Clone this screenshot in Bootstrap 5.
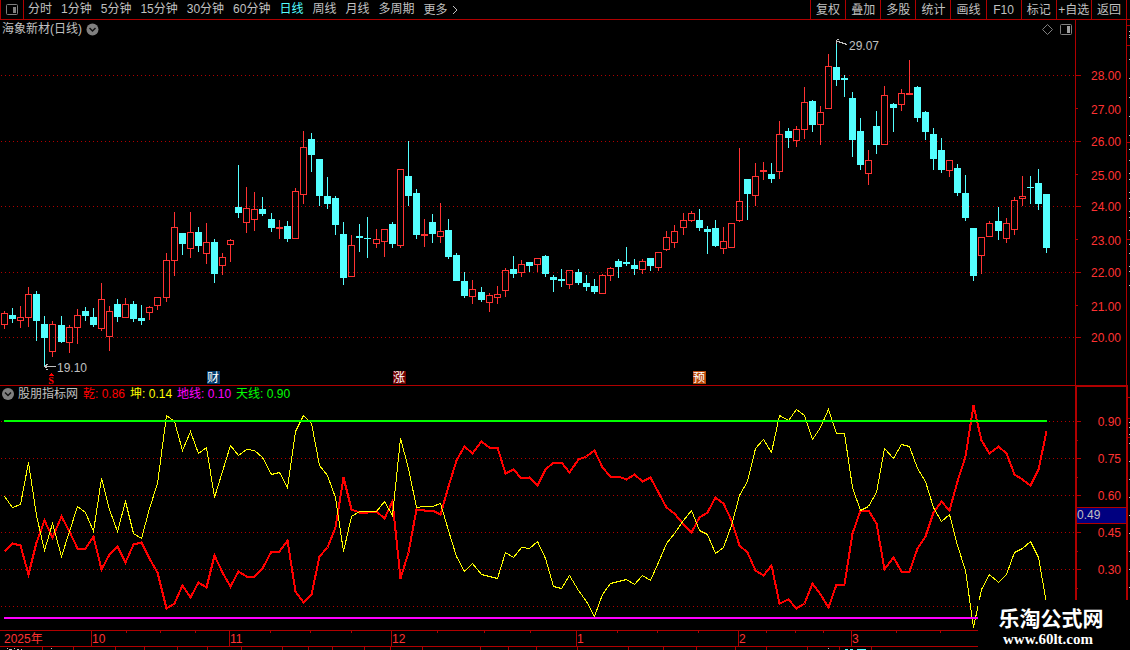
<!DOCTYPE html>
<html lang="zh-CN">
<head>
<meta charset="utf-8">
<meta name="viewport" content="width=device-width, initial-scale=1">
<title>海象新材(日线)</title>
<link href="https://cdn.jsdelivr.net/npm/bootstrap@5.3.0/dist/css/bootstrap.min.css" rel="stylesheet">
<style>
:root { --rule:#b00000; --ink:#c0c0c0; --up:#ff3232; --down:#54ffff; }
body { background:#000; color:var(--ink); font:12px/18px "Liberation Sans","Noto Sans CJK SC",sans-serif; overflow:hidden; }
svg { display:block; }
svg text { font-family:"Liberation Sans","Noto Sans CJK SC",sans-serif; font-size:12px; }
.topbar { height:20px; border-bottom:1px solid var(--rule); }
.topbar a { color:var(--ink); text-decoration:none; white-space:nowrap; }
.topbar a.active { color:var(--down); }
.periods { gap:9px; padding-left:4px; }
.plain-btn { background:none; border:0; padding:0; color:inherit; font:inherit; line-height:18px; }
.layout-btn { width:24px; height:19px; padding-left:4px; border:solid var(--rule); border-width:0 1px; }
.tools { width:320px; padding-right:3px; border-left:1px solid var(--rule); }
.tools .plain-btn { flex:1 1 0; white-space:nowrap; border-right:1px solid var(--rule); height:19px; }
.price-pane { height:366px; border-bottom:1px solid var(--rule); }
.study-pane { height:244px; }
.scale-col { width:51px; }
.pane-title { position:relative; height:18px; white-space:nowrap; }
.study-title { gap:5px; padding-left:2px; height:16px; line-height:16px; }
.price-scale { height:365px; border-left:1px solid var(--rule); }
.study-scale { height:263px; border:2px solid var(--rule); border-bottom:0; width:53px; }
.edge-strip { width:4px; border-left:1px solid var(--rule); }
.dates { height:17px; border:solid var(--rule); border-width:1px 0; }
.footer-strip { height:3px; overflow:hidden; }
.site-mark { right:0; bottom:0; width:152px; height:50px; background:#000; color:#fff; padding:8px 6px 0 0; text-align:center; }
.site-name { font:bold 21px/22px "Liberation Sans","Noto Sans CJK SC",sans-serif; }
.site-url { font:bold 15px/18px "Liberation Serif",serif; color:#fff; text-decoration:none; display:block; padding-right:6px; }
</style>
</head>
<body>
<div class="position-relative d-flex flex-column">
  <header class="topbar d-flex">
    <button class="plain-btn layout-btn" aria-label="布局">
      <svg width="14" height="16"><rect x="1.5" y="2.5" width="11" height="10" rx="1" fill="none" stroke="#808080"/><path d="M8 5h3v6H8z" fill="#808080"/></svg>
    </button>
    <nav class="periods d-flex flex-grow-1">
      <a href="#">分时</a><a href="#">1分钟</a><a href="#">5分钟</a><a href="#">15分钟</a><a href="#">30分钟</a><a href="#">60分钟</a><a href="#" class="active">日线</a><a href="#">周线</a><a href="#">月线</a><a href="#">多周期</a>
      <a href="#" class="d-flex gap-1 align-items-center">更多 <svg width="7" height="10"><path d="M1 1l4 4-4 4" fill="none" stroke="#c0c0c0"/></svg></a>
    </nav>
    <div class="tools d-flex">
      <button class="plain-btn">复权</button><button class="plain-btn">叠加</button><button class="plain-btn">多股</button><button class="plain-btn">统计</button><button class="plain-btn">画线</button><button class="plain-btn">F10</button><button class="plain-btn">标记</button><button class="plain-btn">+自选</button><button class="plain-btn">返回</button>
    </div>
  </header>

  <main class="d-flex">
    <div class="flex-grow-1 overflow-hidden">
      <section class="price-pane position-relative">
        <svg id="price" class="position-absolute top-0 start-0 w-100 h-100"></svg>
        <div class="pane-title d-flex align-items-center justify-content-between ps-0">
          <div class="d-flex align-items-center gap-1" style="padding-left:2px">
            <span>海象新材(日线)</span>
            <button class="plain-btn" aria-label="展开"><svg width="13" height="13"><circle cx="6.5" cy="6.5" r="6" fill="#808080"/><path d="M3.5 5l3 3 3-3" fill="none" stroke="#111" stroke-width="1.5"/></svg></button>
          </div>
          <svg width="34" height="16" class="flex-shrink-0"><path d="M6.5 3.500l5 5-5 5-5-5z" fill="none" stroke="#808080"/><rect x="19.500" y="3.500" width="11" height="10" rx="1" fill="none" stroke="#808080"/><path d="M26 5h3v7h-3z" fill="#a0a0a0"/></svg>
        </div>
      </section>
      <section class="study-pane position-relative">
        <svg id="study" class="position-absolute top-0 start-0 w-100 h-100"></svg>
        <div class="pane-title study-title d-flex align-items-center">
          <button class="plain-btn" aria-label="展开"><svg width="12" height="12"><circle cx="6" cy="6" r="6" fill="#808080"/><path d="M3 4.500l3 3 3-3" fill="none" stroke="#111" stroke-width="1.500"/></svg></button>
          <span style="margin-left:-1px">股朋指标网</span>
          <span style="color:#f00">乾: 0.86</span><span style="color:#ff0">坤: 0.14</span><span style="color:#f0f">地线: 0.10</span><span style="color:#0f0">天线: 0.90</span>
        </div>
      </section>
      <div class="dates"><svg id="dates" width="100%" height="15"></svg></div>
      <div class="footer-strip"><svg id="foot" width="100%" height="3"></svg></div>
    </div>
    <aside class="scale-col">
      <div class="price-scale"><svg id="priceScale" width="50" height="365"></svg></div>
      <div class="study-scale"><svg id="studyScale" width="49" height="261"></svg></div>
    </aside>
    <div class="edge-strip"><svg id="edge" width="3" height="580"></svg></div>
  </main>

  <div class="site-mark position-absolute">
    <div class="site-name">乐淘公式网</div>
    <a class="site-url" href="#">www.60lt.com</a>
  </div>
</div>

<script>
// Each candle: direction, high, body top, body bottom, low.
const candles = `R311,313,325,329 C308,315,319,323 R306,317,321,328 R287,294,318,327 C291,294,321,341 C316,324,338,366 R321,324,352,357 C316,325,342,343 R325,327,343,353 R309,315,328,344
C307,311,316,321 C308,317,325,327 R283,299,329,331 R306,311,337,351 C299,304,317,322 R298,304,318,318 C301,304,319,322 C305,318,321,325 R306,307,313,320 R297,297,306,310
R253,260,298,302 R212,227,261,276 C233,233,244,255 R212,232,249,258 C227,232,246,252 R223,242,254,264 C239,242,274,283 R253,257,266,275 R239,240,245,262 C165,207,213,218
R187,208,223,233 R192,209,220,231 C197,209,214,216 C213,219,228,232 R220,227,229,239 C221,226,239,242 R188,191,239,239 R131,147,195,204 C133,139,155,172 C159,159,196,206
C177,196,204,209 C196,198,225,235 C222,234,278,285 R235,245,277,277 C224,236,238,252 C217,238,239,258 R229,239,244,248 R229,229,242,257 C222,224,244,248 R169,169,246,248
C141,176,196,206 C189,193,235,239 R219,234,236,247 C214,222,234,243 R203,231,237,243 C219,230,257,259 C253,255,281,281 C272,281,296,298 R280,289,297,304 C287,292,300,302
R293,295,303,312 R286,294,298,304 R268,270,291,297 C256,269,274,278 R260,264,273,277 C262,262,266,272 R258,258,265,272 C255,256,274,277 C275,277,280,292 C269,279,281,287
R270,270,285,289 C269,272,283,285 C275,283,287,291 C279,286,292,294 R274,275,294,294 R267,268,276,281 C259,261,267,278 C247,262,264,266 C259,265,269,275 R259,261,270,274
C258,258,266,271 R252,252,268,271 R231,237,250,251 R225,231,243,248 R213,220,228,235 R211,213,221,222 C209,220,228,231 C226,229,232,254 C220,228,246,247 R227,241,249,254
R223,223,248,248 R148,201,221,222 C179,179,194,220 R163,176,196,206 R162,170,172,180 C163,174,179,183 R121,134,172,179 C128,131,138,148 R126,129,141,147 R87,102,130,139
C100,101,125,132 R106,112,125,145 R54,66,109,109 C40,67,80,86 C75,78,80,97 C92,98,140,157 C118,131,165,170 R150,160,174,185 C111,126,145,154 R86,95,145,145
C103,104,108,132 R89,93,105,111 R60,93,95,95 C86,87,118,122 C111,112,132,140 C128,134,159,170 C138,150,170,173 R160,160,171,177 C164,168,193,196 C175,193,218,221
C228,228,276,281 R237,237,256,274 R221,223,237,237 C207,221,231,240 R218,223,239,243 R197,200,230,235 R176,196,199,206 C176,187,188,204 C169,183,204,210 C194,194,248,253`
  .split(/\s+/).map(s => [s[0], ...s.slice(1).split(',').map(Number)]);

const kun = [496,507,504,462,515,550,523,556,531,506,512,531,478,509,531,501,533,538,508,483,415,421,450,431,453,447,497,471,445,455,449,450,457,474,472,487,431,415,423,465,475,497,551,516,511,511,511,501,515,438,468,507,506,506,503,530,556,571,563,574,576,578,552,557,547,548,541,558,586,588,575,590,601,616,594,583,581,579,584,575,580,562,543,533,520,510,530,534,553,547,525,495,481,448,439,452,415,420,409,415,439,427,409,433,433,487,510,506,492,448,458,444,446,468,481,507,521,514,545,570,627,589,574,582,574,552,548,541,557,603];
const qian = [551,543,545,574,542,520,537,516,531,548,548,536,569,554,546,562,544,542,558,572,608,603,585,597,582,587,555,572,586,571,576,576,568,551,551,540,591,602,594,556,547,527,477,509,512,512,511,518,501,578,552,509,510,510,514,486,460,446,453,441,447,447,473,469,478,477,485,469,462,462,472,459,456,450,467,476,476,479,474,481,477,492,507,513,524,532,517,512,497,503,520,545,552,570,575,565,603,599,608,603,583,594,607,584,584,533,510,510,523,569,557,571,571,548,536,512,501,510,481,456,405,440,453,446,453,474,479,485,469,431];

const RULE = '#b00000', UP = '#ff3232', DOWN = '#54ffff', INK = '#c0c0c0';
const $ = id => document.getElementById(id);
const rect = (x, y, w, h, c) => `<rect x="${x}" y="${y}" width="${w}" height="${h}" fill="${c}"/>`;
const text = (x, y, s, c, extra = '') => `<text x="${x}" y="${y}" fill="${c}" ${extra}>${s}</text>`;
const dots = (y, w) => `<path d="M1 ${y + .5}H${w}" stroke="${RULE}" stroke-dasharray="1 3"/>`;

function draw() {
  const w = $('price').clientWidth, step = (w - 33) / 129;
  const X = i => Math.round(4 + i * step);
  const at = x => Math.round(x * w / 1075);

  let s = '<g transform="translate(0,-20)" shape-rendering="crispEdges">';
  [75, 141, 206, 272, 337].forEach(y => s += dots(y, w));
  candles.forEach(([k, h, t, b, l], i) => {
    const x = X(i), c = k === 'R' ? UP : DOWN;
    if (k === 'C' || b - t < 3) s += rect(x, h, 1, l - h, c) + rect(x - 3, t, 7, b - t, c);
    else s += rect(x, h, 1, t - h, c) + rect(x, b, 1, l - b, c) +
      `<rect x="${x - 2.5}" y="${t + .5}" width="6" height="${b - t - 1}" fill="none" stroke="${c}"/>`;
  });
  const hi = X(103), lo = X(5);
  s += `<path d="M${hi} 41.500h3v1h3v1h3v1h2M${hi} 40v4M${hi + 1} 39.500h2M${lo} 366.500h12M${lo + 1} 365.500h2M${lo + 2} 364.500h2M${lo + 1} 367.500h2M${lo + 2} 369.500h2" stroke="${INK}" fill="none"/>`;
  s += text(hi + 13, 50, '29.07', INK) + text(lo + 13, 372, '19.10', INK);
  s += `<path d="M${lo + 4} 376l3-3 3 3z" fill="red"/>` + text(lo + 7, 384, 'S', 'red', 'text-anchor="middle" style="font:bold 10px Liberation Serif,serif"');
  [[207, '财', '#003a6c'], [393, '涨', '#700000'], [693, '预', '#b84808']].forEach(([x, t, c]) =>
    s += rect(at(x), 371, 13, 13, c) + text(at(x), 382, t, '#fff'));
  $('price').innerHTML = s + '</g>';

  const line = a => a.map((y, i) => `${X(i) + .5},${y + .5}`).join(' ');
  s = '<g transform="translate(0,-386)" shape-rendering="crispEdges">';
  [421, 458, 495, 532, 569, 606].forEach(y => s += dots(y, w));
  s += `<polyline points="${line(qian)}" fill="none" stroke="red" stroke-width="2"/>`;
  s += `<polyline points="${line(kun)}" fill="none" stroke="#ff0" stroke-width="1"/>`;
  s += rect(4, 420, w - 32, 2, '#0f0') + rect(4, 617, w - 32, 2, '#f0f');
  $('study').innerHTML = s + '</g>';

  s = '<g shape-rendering="crispEdges">' + text(4, 12, '2025年', UP);
  [[91, '10'], [229, '11'], [391, '12'], [576, '1'], [738, '2'], [851, '3']].forEach(([x, t]) =>
    s += rect(at(x), 0, 1, 15, RULE) + text(at(x) + 1, 12, t, UP));
  [126, 160, 195, 270, 310, 351, 437, 484, 530, 617, 657, 698, 766, 795, 823, 896, 940].forEach(x => s += rect(at(x), 0, 1, 2, RULE));
  $('dates').innerHTML = s + '</g>';

  s = '<g shape-rendering="crispEdges">';
  [42, 73, 115, 144, 177, 207, 241, 282, 308, 332, 364, 390, 422, 480, 508, 536, 577, 628, 663, 696, 735, 766, 807, 839, 871].forEach(x => s += rect(at(x), 0, 1, 3, RULE));
  [[7, 1, 1], [9, 2, 3], [14, 1, 1], [17, 2, 2], [21, 2, 1], [51, 1, 1], [828, 1, 1]].forEach(([x, y, n]) => s += rect(at(x), y, n, 1, INK));
  [[845, 2, 3], [850, 2, 3], [857, 2, 9]].forEach(([x, y, n]) => s += rect(at(x), y, n, 1, DOWN));
  $('foot').innerHTML = s + '</g>';
}

// Value scales on the right.
let p = '<g transform="translate(-1076,-20)" shape-rendering="crispEdges">';
[[75, 80], [108, 114], [141, 146], [174, 180], [206, 211], [239, 245], [272, 277], [305, 311], [337, 342]].forEach(([t, y], i) =>
  p += rect(1076, t, i % 2 ? 2 : 5, 1, RULE) + text(1121, y, (28 - i) + '.00', UP, 'text-anchor="end"'));
$('priceScale').innerHTML = p + '</g>';

p = '<g transform="translate(-1077,-387)" shape-rendering="crispEdges">';
['0.90', '0.75', '0.60', '0.45', '0.30'].forEach((v, i) => {
  const y = 421 + i * 37;
  p += rect(1077, y, 4, 1, RULE) + rect(1077, y + 19, 1, 1, RULE) + text(1121, y + 5, v, UP, 'text-anchor="end"');
});
p += rect(1077, 507, 49, 17, RULE) + rect(1077, 508, 49, 15, '#000080') + text(1077, 519, '0.49', INK);
$('studyScale').innerHTML = p + '</g>';

p = '<g transform="translate(0,-20)" shape-rendering="crispEdges">';
[25, 45, 142, 239, 397, 418, 437].forEach(y => p += rect(0, y, 3, 1, RULE));
[31, 35, 37, 59, 78, 97, 116, 135, 149, 160, 173, 179, 192, 198, 211, 217, 230, 244, 253, 266, 271, 285, 422, 427, 434, 443, 461, 479, 497, 515, 533, 551, 569, 587].forEach(y => p += rect(2, y, 1, 1, INK));
$('edge').innerHTML = p + '</g>';

draw();
addEventListener('resize', draw);
</script>
</body>
</html>
